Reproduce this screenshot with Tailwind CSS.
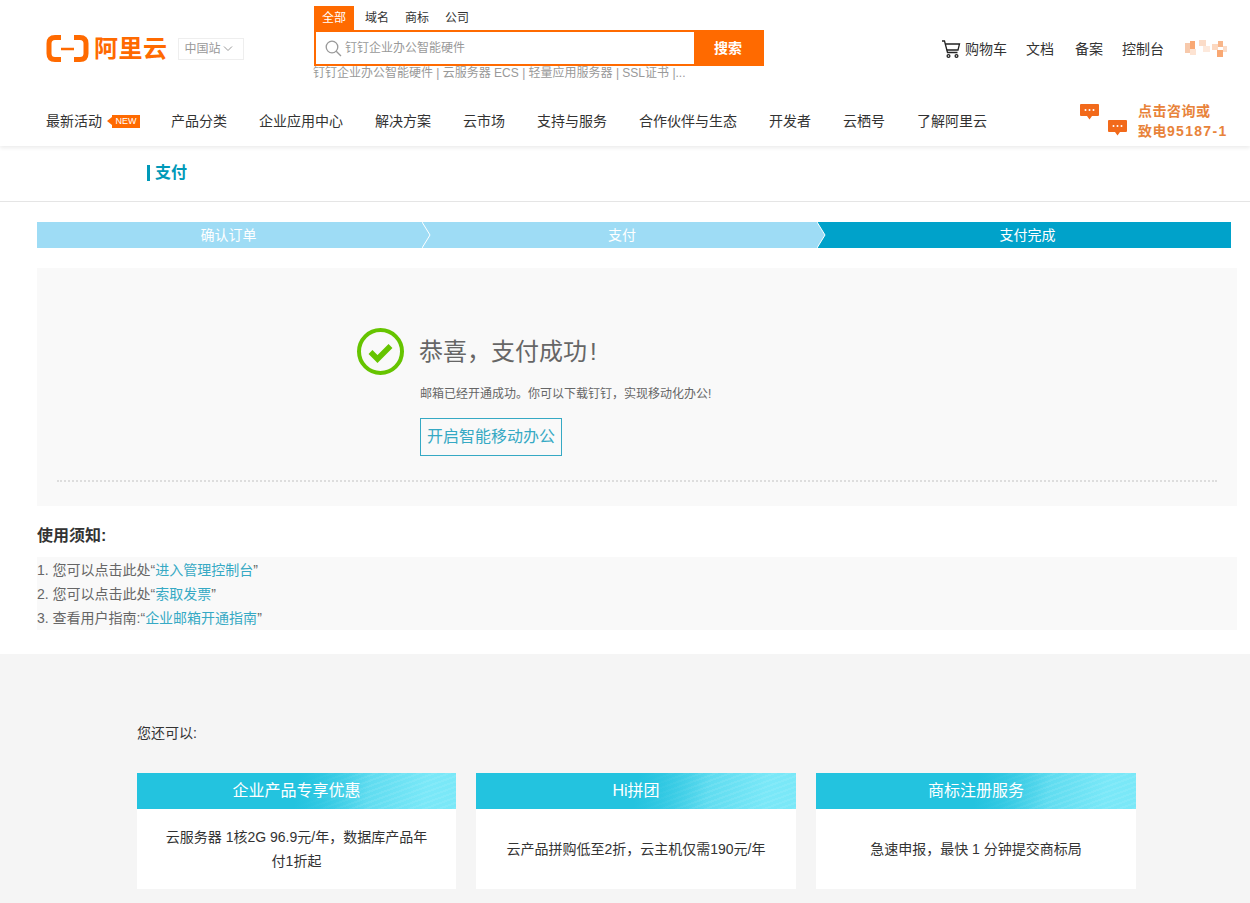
<!DOCTYPE html>
<html lang="zh-CN">
<head>
    <meta charset="UTF-8">
    <title>支付</title>
    <script src="https://cdn.jsdelivr.net/npm/@tailwindcss/browser@4"></script>
</head>
<body class="bg-white h-[903px] overflow-hidden font-['Liberation_Sans','Noto_Sans_CJK_SC',sans-serif] text-[#333]">
    <!-- top header -->
    <header class="h-[146px] shadow-[0_2px_4px_rgba(0,0,0,0.08)] relative">
        <div class="h-[96px] flex items-start pl-[46px] pr-[23px]">
            <div class="w-[268px] pt-[35px] flex items-center">
                <svg class="w-[43px] h-[27px]" viewBox="0 0 43 27" fill="none" stroke="#ff6a00">
                    <path d="M15 2.500H9Q3 2.500 3 8.500V18.500Q3 24.500 9 24.500H15" stroke-width="5"/>
                    <path d="M28 2.500H34Q40 2.500 40 8.500V18.500Q40 24.500 34 24.500H28" stroke-width="5"/>
                    <path d="M15 14H28" stroke-width="2.500"/>
                </svg>
                <span class="ml-[5px] text-[24px] tracking-[0.5px] leading-[27px] font-bold text-[#ff6a00]">阿里云</span>
                <div class="ml-[10px] w-[66px] h-[22px] border border-[#eee] flex items-center pl-[6px] gap-[2px] text-[12px] text-[#999]">
                    中国站
                    <svg class="w-[10px] h-[6px]" viewBox="0 0 10 6" fill="none" stroke="#999"><path d="M1 .5L5 4.5L9 .5"/></svg>
                </div>
            </div>
            <div class="w-[450px] pt-[6px]">
                <div class="flex h-[24px] text-[12px] leading-[24px]">
                    <a class="w-[40px] text-center bg-[#ff6a00] text-white">全部</a>
                    <a class="w-[40px] ml-[3px] text-center">域名</a>
                    <a class="w-[40px] text-center">商标</a>
                    <a class="w-[40px] text-center">公司</a>
                </div>
                <div class="flex h-[36px] border-2 border-[#ff6a00]">
                    <div class="flex-1 flex items-center pl-[9px] gap-[3px] text-[12px] text-[#999]">
                        <svg class="w-[17px] h-[17px]" viewBox="0 0 17 17" fill="none" stroke="#999" stroke-width="1.3"><circle cx="7" cy="7" r="5.8"/><path d="M11.2 11.2L16 16"/></svg>
                        钉钉企业办公智能硬件
                    </div>
                    <button class="w-[68px] bg-[#ff6a00] text-white text-[14px] font-bold">搜索</button>
                </div>
                <div class="text-[12px] leading-[14px] text-[#999] whitespace-nowrap -ml-[1px]">钉钉企业办公智能硬件 | 云服务器 ECS | 轻量应用服务器 | SSL证书 |...</div>
            </div>
            <div class="flex-1 flex justify-end items-center pt-[37px] text-[14px] leading-[24px]">
                <svg class="w-[20px] h-[19px] mr-[4px]" viewBox="0 0 20 19" fill="none" stroke="#222" stroke-width="1.3">
                    <path d="M1 1H3.500L6.500 12.500H16.500"/><path d="M4.300 4H18.500L17 10H5.800"/><circle cx="7.500" cy="16" r="1.400"/><circle cx="15.500" cy="16" r="1.400"/>
                </svg>
                <span>购物车</span>
                <span class="ml-[19px]">文档</span>
                <span class="ml-[21px]">备案</span>
                <span class="ml-[19px]">控制台</span>
                <svg class="ml-[21px] w-[42px] h-[18px]" viewBox="0 0 42 18">
                    <rect x="0" y="3" width="5" height="10" fill="#f7c9ab"/><rect x="5" y="1" width="5" height="8" fill="#f9a873"/><rect x="5" y="9" width="6" height="6" fill="#fde3d2"/><rect x="14" y="0" width="7" height="6" fill="#fbdcc8"/><rect x="18" y="6" width="7" height="6" fill="#fde9dc"/><rect x="27" y="4" width="6" height="6" fill="#fcd8c0"/><rect x="33" y="1" width="5" height="6" fill="#f8b68a"/><rect x="32" y="10" width="6" height="7" fill="#f9a873"/><rect x="38" y="6" width="4" height="6" fill="#fbdcc8"/>
                </svg>
            </div>
        </div>
        <nav class="h-[50px] flex items-start pl-[46px] pr-[23px] pt-[15px] text-[14px] leading-[20px]">
            <a class="flex items-center">最新活动
                <span class="ml-[5px] w-0 h-0 border-y-[4px] border-y-transparent border-r-[5px] border-r-[#ff6a00]"></span>
                <span class="w-[28px] h-[13px] bg-[#ff6a00] text-white text-[9px] leading-[13px] text-center">NEW</span>
            </a>
            <a class="ml-[31px]">产品分类</a>
            <a class="ml-[32px]">企业应用中心</a>
            <a class="ml-[32px]">解决方案</a>
            <a class="ml-[32px]">云市场</a>
            <a class="ml-[32px]">支持与服务</a>
            <a class="ml-[32px]">合作伙伴与生态</a>
            <a class="ml-[32px]">开发者</a>
            <a class="ml-[32px]">云栖号</a>
            <a class="ml-[32px]">了解阿里云</a>
            <div class="ml-auto flex -mt-[10px]">
                <div class="w-[48px] h-[32px] relative mr-[10px]">
                    <svg class="absolute left-0 top-[3px] w-[19px] h-[16px]" viewBox="0 0 19 16"><path d="M1 0H18Q19 0 19 1V11Q19 12 18 12H12L9.500 15.500L7 12H1Q0 12 0 11V1Q0 0 1 0Z" fill="#f26a1b"/><circle cx="5.500" cy="6" r="1" fill="#fff"/><circle cx="9.500" cy="6" r="1" fill="#fff"/><circle cx="13.500" cy="6" r="1" fill="#fff"/></svg>
                    <svg class="absolute left-[28px] top-[19px] w-[19px] h-[16px]" viewBox="0 0 19 16"><path d="M1 0H18Q19 0 19 1V11Q19 12 18 12H12L9.500 15.500L7 12H1Q0 12 0 11V1Q0 0 1 0Z" fill="#f26a1b"/><circle cx="5.500" cy="6" r="1" fill="#fff"/><circle cx="9.500" cy="6" r="1" fill="#fff"/><circle cx="13.500" cy="6" r="1" fill="#fff"/></svg>
                </div>
                <div class="text-[14px] leading-[20px] font-bold text-[#e8833a] tracking-[0.5px] w-[89px] whitespace-nowrap">点击咨询或<br>致电<span class="tracking-[1.3px]">95187-1</span></div>
            </div>
        </nav>
    </header>

    <!-- page title -->
    <div class="h-[56px] border-b border-[#e5e5e5] pl-[147px] pb-[2px] flex items-center">
        <span class="w-[3px] h-[16px] bg-[#0099b8] mr-[5px]"></span>
        <span class="text-[16px] font-bold text-[#0099b8]">支付</span>
    </div>

    <main class="pl-[37px] pr-[13px]">
        <!-- steps -->
        <div class="mt-[20px] mr-[6px] h-[26px] flex text-[14px] leading-[26px] text-white text-center relative">
            <div class="w-[385px] bg-[#9edcf5] pr-[2px]">确认订单</div>
            <div class="w-[395px] bg-[#9edcf5] pl-[5px]">支付</div>
            <div class="flex-1 bg-[#00a2ca] pl-[7px]">支付完成</div>
            <svg class="absolute left-[385px] top-0 w-[10px] h-[26px]" viewBox="0 0 10 26" fill="none" stroke="#fff"><path d="M0 0L8 13L0 26"/></svg>
            <svg class="absolute left-[780px] top-0 w-[10px] h-[26px]" viewBox="0 0 10 26"><path d="M0 0L8 13L0 26Z" fill="#9edcf5"/><path d="M0 0L8 13L0 26" fill="none" stroke="#fff"/></svg>
        </div>

        <!-- success panel -->
        <section class="mt-[20px] h-[238px] bg-[#f9f9f9] px-[20px] pt-[60px]">
            <div class="h-[154px] pl-[300px] flex items-start gap-[15px] border-b-2 border-dotted border-[#ddd]">
                <svg class="w-[47px] h-[47px] shrink-0" viewBox="0 0 47 47" fill="none">
                    <circle cx="23.500" cy="23.500" r="21.500" stroke="#66c400" stroke-width="4"/>
                    <path d="M13.500 24L20.500 31L33.500 18" stroke="#66c400" stroke-width="5.500"/>
                </svg>
                <div>
                    <h1 class="text-[24px] leading-[48px] text-[#666]">恭喜，支付成功<span class="ml-[3px]">!</span></h1>
                    <p class="mt-[9px] text-[12px] leading-[18px] text-[#666] ml-[1px]">邮箱已经开通成功。你可以下载钉钉，实现移动化办公!</p>
                    <a class="mt-[15px] ml-[1px] block w-[142px] h-[38px] border border-[#36a9c4] text-[16px] leading-[36px] text-center text-[#36a9c4]">开启智能移动办公</a>
                </div>
            </div>
        </section>

        <h2 class="mt-[18px] text-[16px] leading-[24px] font-bold text-[#333]">使用须知:</h2>
        <ul class="mt-[9px] h-[73px] bg-[#f9f9f9] pt-[1px] text-[14px] leading-[24px] text-[#666]">
            <li>1. 您可以点击此处“<a class="text-[#36a9c4]">进入管理控制台</a>”</li>
            <li>2. 您可以点击此处“<a class="text-[#36a9c4]">索取发票</a>”</li>
            <li>3. 查看用户指南:“<a class="text-[#36a9c4]">企业邮箱开通指南</a>”</li>
        </ul>
    </main>

    <!-- more -->
    <section class="mt-[24px] h-[249px] bg-[#f5f5f5] pl-[137px] pt-[69px]">
        <p class="text-[14px] leading-[20px] text-[#333]">您还可以:</p>
        <div class="mt-[30px] grid grid-cols-[319px_320px_320px] gap-x-[20px]">
            <div class="bg-white h-[116px]">
                <div class="h-[36px] leading-[36px] text-center text-[16px] text-white bg-[linear-gradient(100deg,#23c3df_50%,rgba(35,195,223,0)_72%),repeating-linear-gradient(-20deg,rgba(255,255,255,0.08)_0,rgba(255,255,255,0.08)_2px,transparent_2px,transparent_5px),linear-gradient(100deg,#3fcde6_50%,#7ae8f8_90%)]">企业产品专享优惠</div>
                <p class="h-[80px] px-[24px] flex items-center justify-center text-center text-[14px] leading-[24px]">云服务器 1核2G 96.9元/年，数据库产品年付1折起</p>
            </div>
            <div class="bg-white h-[116px]">
                <div class="h-[36px] leading-[36px] text-center text-[16px] text-white bg-[linear-gradient(100deg,#23c3df_50%,rgba(35,195,223,0)_72%),repeating-linear-gradient(-20deg,rgba(255,255,255,0.08)_0,rgba(255,255,255,0.08)_2px,transparent_2px,transparent_5px),linear-gradient(100deg,#3fcde6_50%,#7ae8f8_90%)]">Hi拼团</div>
                <p class="h-[80px] px-[24px] flex items-center justify-center text-center text-[14px] leading-[24px]">云产品拼购低至2折，云主机仅需190元/年</p>
            </div>
            <div class="bg-white h-[116px]">
                <div class="h-[36px] leading-[36px] text-center text-[16px] text-white bg-[linear-gradient(100deg,#23c3df_50%,rgba(35,195,223,0)_72%),repeating-linear-gradient(-20deg,rgba(255,255,255,0.08)_0,rgba(255,255,255,0.08)_2px,transparent_2px,transparent_5px),linear-gradient(100deg,#3fcde6_50%,#7ae8f8_90%)]">商标注册服务</div>
                <p class="h-[80px] px-[24px] flex items-center justify-center text-center text-[14px] leading-[24px]">急速申报，最快 1 分钟提交商标局</p>
            </div>
        </div>
    </section>
</body>
</html>
